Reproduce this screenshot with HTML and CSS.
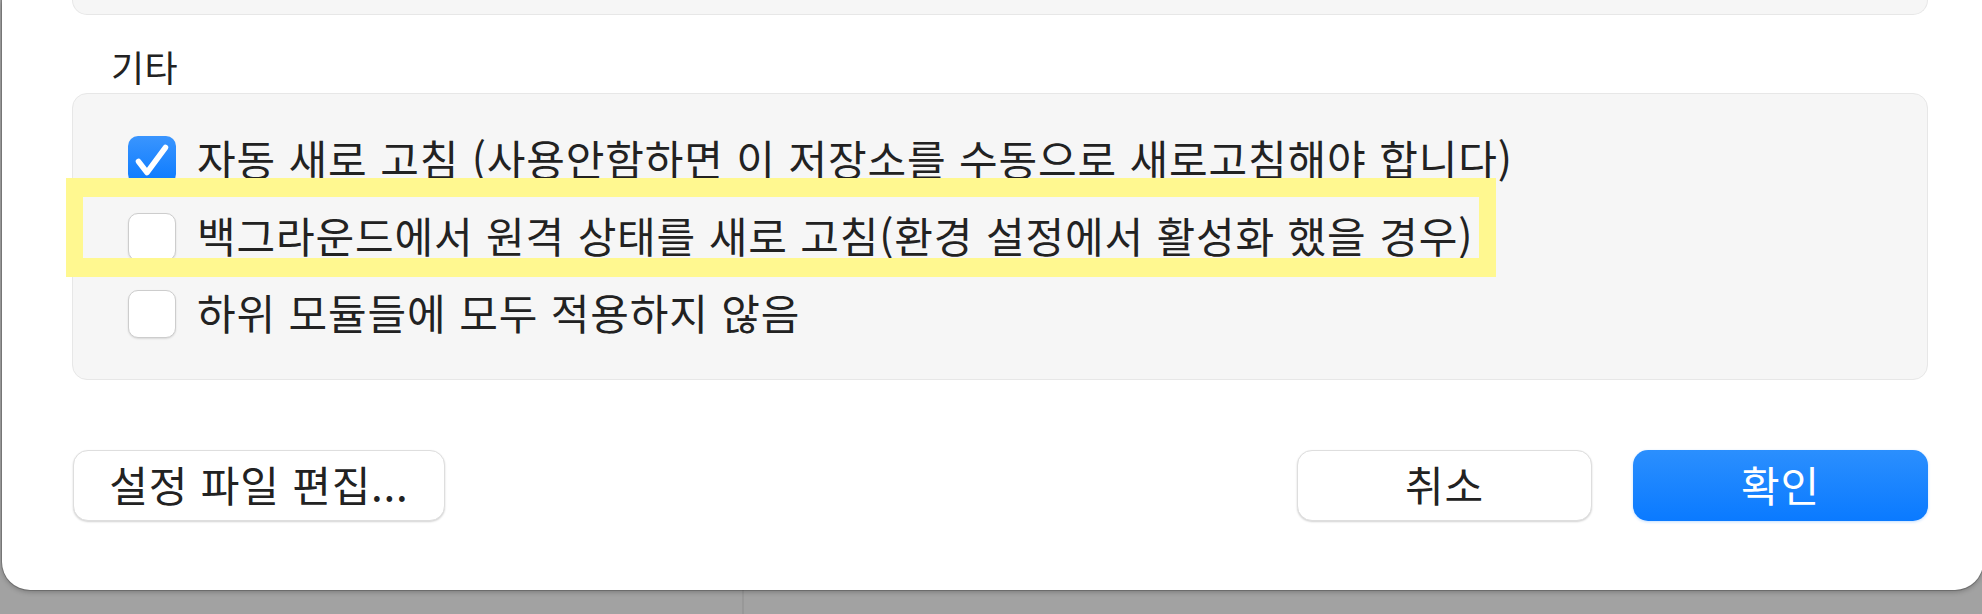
FILE: index.html
```html
<!DOCTYPE html>
<html lang="ko">
<head>
    <meta charset="UTF-8">
    <meta name="viewport" content="width=device-width, initial-scale=1.0">
    <title>저장소 설정</title>
    <link rel="stylesheet" href="styles.css">
</head>
<body>
    <div class="dialog">
        <div class="panel panel-top"></div>

        <div class="section-title">기타</div>
        <div class="panel options">
            <label class="option">
                <span class="box checked">
                    <svg viewBox="0 0 48 48" width="48" height="48"><path d="M10.5 25.5 L19 36.5 L37.5 11.5" fill="none" stroke="#fff" stroke-width="5.5" stroke-linecap="round" stroke-linejoin="round"/></svg>
                </span>
                <span class="option-text">자동 새로 고침 (사용안함하면 이 저장소를 수동으로 새로고침해야 합니다)</span>
            </label>
            <label class="option">
                <span class="box"></span>
                <span class="option-text">백그라운드에서 원격 상태를 새로 고침(환경 설정에서 활성화 했을 경우)</span>
            </label>
            <label class="option">
                <span class="box"></span>
                <span class="option-text">하위 모듈들에 모두 적용하지 않음</span>
            </label>
        </div>

        <div class="actions">
            <button class="btn btn-edit">설정 파일 편집...</button>
            <div class="spacer"></div>
            <button class="btn btn-wide">취소</button>
            <button class="btn btn-wide btn-primary">확인</button>
        </div>

        <!-- annotation marker over the second option -->
        <div class="highlight"></div>
    </div>
</body>
</html>
```

FILE: styles.css
```css
html, body {
    margin: 0;
    padding: 0;
    height: 100%;
    overflow: hidden;
}
body {
    font-family: "Noto Sans CJK KR", "Noto Sans", sans-serif;
    color: #222;
    background-color: #a2a2a2;
    background-image: linear-gradient(to right, transparent 742px, #989898 742px, #989898 744px, transparent 744px);
}
.dialog {
    position: relative;
    box-sizing: border-box;
    width: 1981px;
    height: 590px;
    margin-left: 2px;
    padding: 0 55px 0 70px;
    background: #fff;
    border-radius: 0 0 28px 28px;
    box-shadow: 0 0 0 1px rgba(0, 0, 0, 0.18), 0 2px 5px rgba(0, 0, 0, 0.25);
}
.panel {
    background: #f6f6f6;
    border: 1px solid #e7e7e7;
    border-radius: 15px;
}
.panel-top {
    height: 14px;
    border-top: none;
    border-radius: 0 0 15px 15px;
}
.section-title {
    margin: 30px 0 6px;
    padding-left: 39px;
    font-size: 36px;
    line-height: 42px;
    letter-spacing: 0.5px;
}
.options {
    display: flex;
    flex-direction: column;
    padding: 27px 0 27px 55px;
}
.option {
    display: flex;
    align-items: center;
    gap: 21px;
    height: 77px;
}
.option-text {
    font-size: 42px;
    line-height: 60px;
    letter-spacing: 0.85px;
    padding-bottom: 4px;
    white-space: nowrap;
}
.box {
    box-sizing: border-box;
    flex: none;
    width: 48px;
    height: 48px;
    border-radius: 10px;
    background: #fff;
    border: 1px solid #cdcdcd;
    box-shadow: 0 1px 2px rgba(0, 0, 0, 0.12);
}
.box svg {
    display: block;
    margin: -1px;
}
.box.checked {
    border: none;
    background: linear-gradient(to bottom, #3a95fe, #0a7aff);
    box-shadow: none;
}
.box.checked svg {
    margin: 0;
}
.actions {
    display: flex;
    gap: 41px;
    margin-top: 70px;
}
.spacer {
    flex: 1;
}
.btn {
    box-sizing: border-box;
    height: 71px;
    padding: 0 0 5px;
    font-family: inherit;
    font-size: 42px;
    letter-spacing: 0.8px;
    color: #222;
    background: #fff;
    border: 1px solid #dedede;
    border-radius: 15px;
    box-shadow: 0 1px 2px rgba(0, 0, 0, 0.18);
    cursor: pointer;
}
.btn-edit {
    width: 372px;
    margin-left: 1px;
}
.btn-wide {
    width: 295px;
}
.btn-primary {
    color: #fff;
    border: none;
    background: linear-gradient(to bottom, #2b8ffe, #0a7aff);
    box-shadow: 0 1px 3px rgba(10, 122, 255, 0.25);
}
.highlight {
    position: absolute;
    left: 64px;
    top: 178px;
    width: 1430px;
    height: 99px;
    box-sizing: border-box;
    border: solid #fff890;
    border-width: 19px 17px;
    pointer-events: none;
}
```
